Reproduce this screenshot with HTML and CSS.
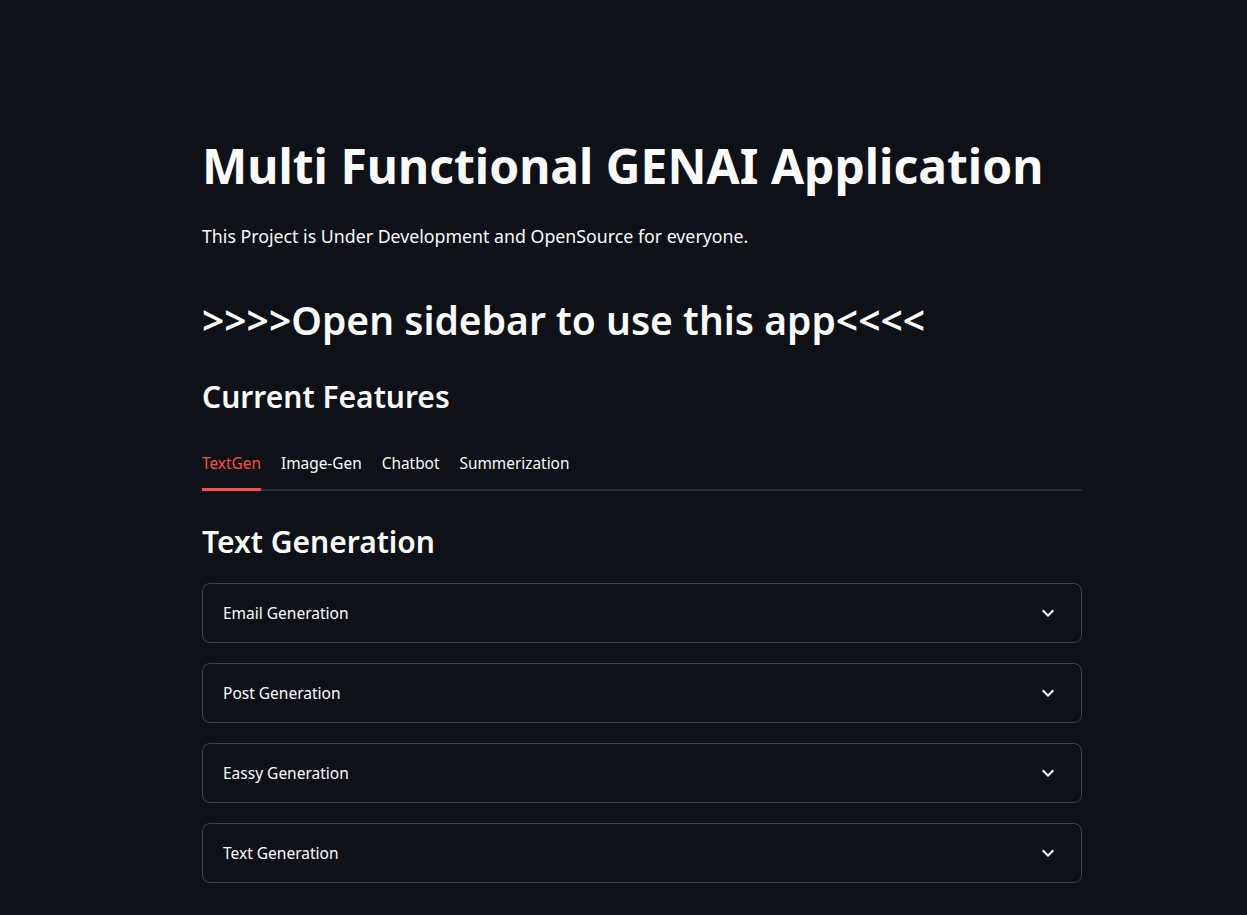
FILE: index.html
```html
<!DOCTYPE html>
<html lang="en">
<head>
    <meta charset="UTF-8">
    <meta name="viewport" content="width=device-width, initial-scale=1.0">
    <title>Multi Functional GENAI Application</title>
    <link rel="stylesheet" href="styles.css">
</head>
<body>
    <div class="main">
        <div class="block">
            <h1 class="title">Multi Functional GENAI Application</h1>
            <p class="intro">This Project is Under Development and OpenSource for everyone.</p>
            <h1 class="notice">&gt;&gt;&gt;&gt;Open sidebar to use this app&lt;&lt;&lt;&lt;</h1>
            <h3 class="subheader">Current Features</h3>

            <div class="tabs">
                <button class="tab active">TextGen</button>
                <button class="tab">Image-Gen</button>
                <button class="tab">Chatbot</button>
                <button class="tab">Summerization</button>
            </div>

            <h2 class="header">Text Generation</h2>

            <div class="expanders">
                <details class="expander">
                    <summary>Email Generation
                        <svg class="chevron" viewBox="0 0 24 24"><path d="M16.59 8.59L12 13.17 7.41 8.59 6 10l6 6 6-6z"/></svg>
                    </summary>
                </details>
                <details class="expander">
                    <summary>Post Generation
                        <svg class="chevron" viewBox="0 0 24 24"><path d="M16.59 8.59L12 13.17 7.41 8.59 6 10l6 6 6-6z"/></svg>
                    </summary>
                </details>
                <details class="expander">
                    <summary>Eassy Generation
                        <svg class="chevron" viewBox="0 0 24 24"><path d="M16.59 8.59L12 13.17 7.41 8.59 6 10l6 6 6-6z"/></svg>
                    </summary>
                </details>
                <details class="expander">
                    <summary>Text Generation
                        <svg class="chevron" viewBox="0 0 24 24"><path d="M16.59 8.59L12 13.17 7.41 8.59 6 10l6 6 6-6z"/></svg>
                    </summary>
                </details>
            </div>
        </div>
    </div>
</body>
</html>
```

FILE: styles.css
```css
body {
    margin: 0;
    background-color: #0e1117;
    color: #fafafa;
    font-family: "Source Sans Pro", "Noto Sans", sans-serif;
    font-variant-ligatures: none;
}
.main {
    padding: 136px 165px 40px 202px;
}
.block {
    width: 880px;
}
h1, h2, h3, p {
    margin: 0;
}
.title {
    font-size: 48px;
    line-height: 60px;
    font-weight: 700;
}
.intro {
    margin-top: 28px;
    font-size: 17.75px;
    line-height: 24px;
}
.notice {
    margin-top: 48px;
    font-size: 39px;
    line-height: 48px;
    font-weight: 600;
}
.subheader {
    margin-top: 35px;
    font-size: 30px;
    line-height: 36px;
    font-weight: 600;
}
.tabs {
    margin-top: 37px;
    display: flex;
    gap: 20px;
    border-bottom: 2px solid #2b2c33;
}
.tab {
    background: none;
    border: none;
    border-bottom: 3px solid transparent;
    margin-bottom: -2px;
    padding: 0 0 12px;
    color: #fafafa;
    font-family: inherit;
    font-size: 15.4px;
    line-height: 24px;
    cursor: pointer;
}
.tab.active {
    color: #ff4b4b;
    border-bottom-color: #ff4b4b;
}
.header {
    margin-top: 32px;
    font-size: 30px;
    line-height: 37px;
    font-weight: 600;
}
.expanders {
    margin-top: 23px;
    display: flex;
    flex-direction: column;
    gap: 20px;
}
.expander {
    border: 1px solid rgba(250, 250, 250, 0.2);
    border-radius: 8px;
}
.expander summary {
    list-style: none;
    display: flex;
    align-items: center;
    justify-content: space-between;
    height: 58px;
    padding: 0 21px 0 20px;
    font-size: 15.5px;
    cursor: pointer;
}
.expander summary::-webkit-details-marker {
    display: none;
}
.chevron {
    width: 24px;
    height: 24px;
    fill: #fafafa;
}
```
